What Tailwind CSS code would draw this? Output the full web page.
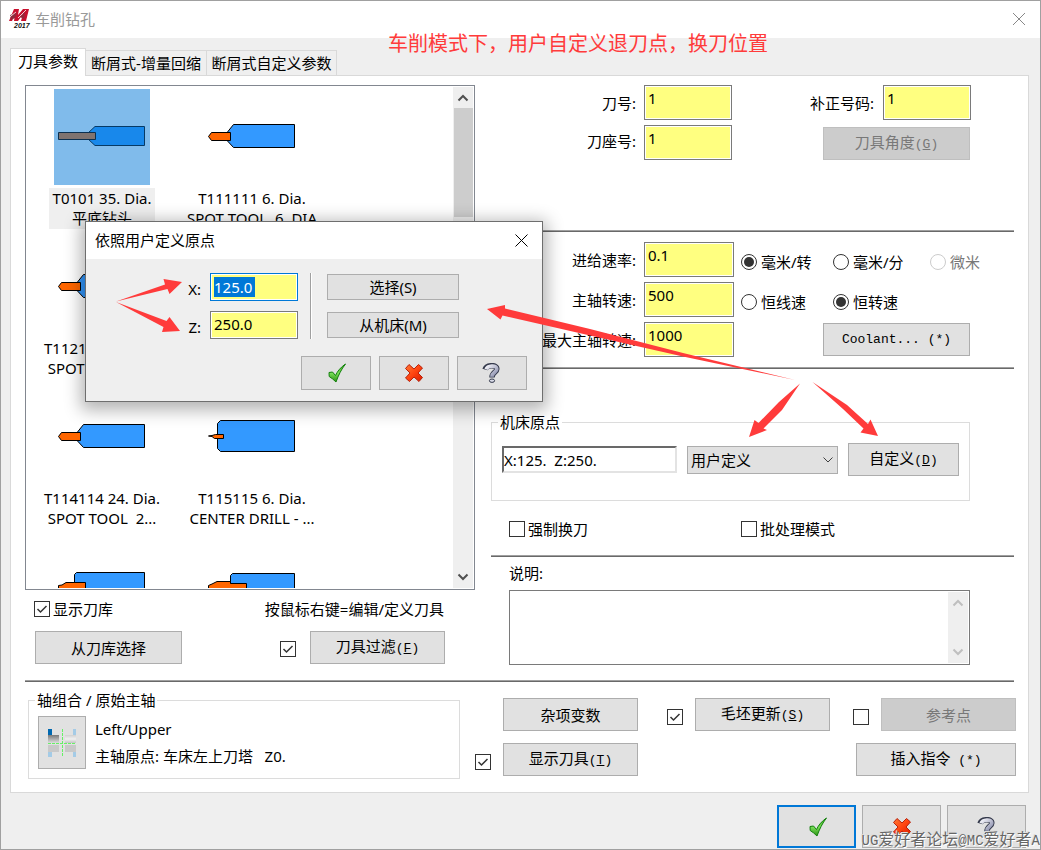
<!DOCTYPE html>
<html lang="zh-CN">
<head>
<meta charset="utf-8">
<title>车削钻孔</title>
<script src="https://cdn.jsdelivr.net/npm/@tailwindcss/browser@4"></script>
</head>
<body class="font-['Noto_Sans','Noto_Sans_CJK_SC',sans-serif] text-[15px] leading-5 text-black">

<svg width="0" height="0" class="absolute" aria-hidden="true">
  <defs>
    <linearGradient id="gGreen" x1="0" y1="0" x2="0" y2="1"><stop offset="0" stop-color="#3fae1c"/><stop offset=".5" stop-color="#7be05a"/><stop offset="1" stop-color="#2a8f10"/></linearGradient>
    <linearGradient id="gRed" x1="0" y1="0" x2="1" y2="1"><stop offset="0" stop-color="#ff7a35"/><stop offset=".5" stop-color="#ff4410"/><stop offset="1" stop-color="#d81c00"/></linearGradient>
    <linearGradient id="gGray" x1="0" y1="0" x2="1" y2="1"><stop offset="0" stop-color="#f4f4fa"/><stop offset="1" stop-color="#8488a8"/></linearGradient>
    <symbol id="ok" viewBox="0 0 20 20"><path d="M3 9.500 L6.500 9 L9.500 12.500 C11.500 8 15 4 19.500 1 C15.500 6 12.500 12 10 19 Q6.500 15.500 3.200 13.500 Z" fill="url(#gGreen)" stroke="#12800c" stroke-width="1"/></symbol>
    <symbol id="no" viewBox="0 0 20 20"><path d="M5 1.500 L10 6 L14.500 1.500 L18.500 5 L14 10 L18.500 14.500 L15 18.500 L10 14 L5.500 18.500 L1.500 15 L6 10 L1.500 5.500 Z" fill="url(#gRed)" stroke="#b8200a" stroke-width="1" stroke-linejoin="round"/></symbol>
    <symbol id="help" viewBox="0 0 20 20"><g fill="none"><path d="M3 6.500 C4.500 1.800 14.800 1.200 14.800 6 C14.800 9.400 10 9.200 10 14.500" stroke="#353a4c" stroke-width="5.500"/><path d="M4.200 6.400 C5.500 2.500 14.800 1.700 14.800 6 C14.800 9.400 10 9.200 10 13.700" stroke="url(#gGray)" stroke-width="3.700"/></g><ellipse cx="10" cy="17.700" rx="2.600" ry="1.700" fill="#d9dbe8" stroke="#353a4c"/></symbol>
    <symbol id="tick" viewBox="0 0 16 16"><path d="M3.500 8 L6.500 11 L12.500 5" fill="none" stroke="#333" stroke-width="1.500"/></symbol>
    <symbol id="spot" viewBox="0 0 96 96"><path d="M23.500 43 L29.500 35.500 H90.500 V58.500 H29.500 L23.500 52 Z" fill="#3399ff" stroke="#000"/><path d="M7.500 43.500 H26.500 V51.500 H7.500 L4.500 47.500 Z" fill="#ff6600" stroke="#000"/></symbol>
  </defs>
</svg>

<main class="relative flex min-h-screen flex-col overflow-hidden border border-[#a0a0a0] bg-[#efefef]">
  <header class="flex h-[37px] shrink-0 items-center bg-white pr-[13px] pb-px pl-2">
    <svg class="h-5 w-[22px]" viewBox="0 0 22 20" aria-hidden="true">
      <path d="M5 0 H10 L9 6 L14 0 H20 L17 12 H12 L14 5 L9 12 H5 L6 5 L3 12 H0 Z" fill="#c8102e"/>
      <path d="M1 6 L8 4 L6 9 L2 11 Z M11 8 L16 3 L15 10 Z" fill="#8e2a3c"/>
      <path d="M0 8.500 L7 3 M9 9 L17 1" stroke="#fff" stroke-width=".8"/>
      <text x="5" y="19" font-family="Liberation Sans" font-size="7" font-weight="bold" font-style="italic" fill="#111">2017</text>
    </svg>
    <h1 class="ml-1 text-[#999]">车削钻孔</h1>
    <button type="button" aria-label="关闭窗口" class="ml-auto grid size-4 place-items-center"><svg class="size-3" viewBox="0 0 12 12"><path d="M0 0 L12 12 M12 0 L0 12" stroke="#888" fill="none"/></svg></button>
  </header>

  <nav class="z-10 -mb-px flex items-end pt-[10px] pl-[9px]">
    <button type="button" class="h-7 w-[76px] border border-b-0 border-[#d9d9d9] bg-white pb-1 whitespace-nowrap">刀具参数</button>
    <button type="button" class="mb-px h-[25px] w-[121px] border-t border-r border-[#d9d9d9] whitespace-nowrap">断屑式-增量回缩</button>
    <button type="button" class="mb-px h-[25px] w-[130px] border-t border-r border-[#d9d9d9] whitespace-nowrap">断屑式自定义参数</button>
  </nav>

  <section class="mr-[11px] ml-[9px] border border-[#d9d9d9] bg-white pb-[13px]">
    <div class="flex gap-4 px-[14px] pt-[9px]">

      <div class="w-[450px] shrink-0">
        <div class="flex h-[505px] border border-[#828790] p-px">
          <ul class="grid flex-1 auto-rows-[150px] grid-cols-[150px_150px] overflow-hidden pt-0.5 text-center whitespace-pre">
            <li class="flex flex-col items-center">
              <svg class="size-24 shrink-0 bg-[#80bbeb]" viewBox="0 0 96 96"><path d="M34 44 L41 37.500 H90.500 V56.500 H41 L34 50 Z" fill="#1888eb" stroke="#063a66"/><path d="M4.500 43.500 H41.500 V50.500 H4.500 Z" fill="#7f7370" stroke="#0b3050"/></svg>
              <span class="mt-[3px] w-[106px] bg-[#efefef] pb-px">T0101 35. Dia.<br>平底钻头</span>
            </li>
            <li class="flex flex-col items-center"><svg class="size-24 shrink-0"><use href="#spot"/></svg><span class="mt-[3px]">T111111 6. Dia.<br>SPOT TOOL  6. DIA</span></li>
            <li class="flex flex-col items-center"><svg class="size-24 shrink-0"><use href="#spot"/></svg><span class="mt-[3px]">T112112 24. Dia.<br>SPOT TOOL  2...</span></li>
            <li></li>
            <li class="flex flex-col items-center"><svg class="size-24 shrink-0"><use href="#spot"/></svg><span class="mt-[3px]">T114114 24. Dia.<br>SPOT TOOL  2...</span></li>
            <li class="flex flex-col items-center"><svg class="size-24 shrink-0" viewBox="0 0 96 96"><path d="M16.500 31.500 H90.500 V62.500 H16.500 L13.500 59.500 V34.500 Z" fill="#3399ff" stroke="#000"/><path d="M4.500 47 L8 46.500 L11.500 45.500 H19.500 V49.500 H10.500 L8 47.500 Z" fill="#ff6600" stroke="#000"/></svg><span class="mt-[3px]">T115115 6. Dia.<br>CENTER DRILL - ...</span></li>
            <li class="flex flex-col items-center"><svg class="size-24 shrink-0" viewBox="0 0 96 96"><path d="M22.500 33.500 H90.500 V62.500 H20.500 V35.500 Z" fill="#3399ff" stroke="#000"/><path d="M4.500 46.500 L8 46 L12 43.500 H31.500 V52.500 H4.500 Z" fill="#ff6600" stroke="#000"/></svg></li>
            <li class="flex flex-col items-center"><svg class="size-24 shrink-0" viewBox="0 0 96 96"><path d="M28.500 34.500 H90.500 V62.500 H26.500 V36.500 Z" fill="#3399ff" stroke="#000"/><path d="M4.500 46.500 L8 45 L13 42.500 H26.500 V44.500 H42.500 V52.500 H4.500 Z" fill="#ff6600" stroke="#000"/></svg></li>
          </ul>
          <div class="flex w-5 shrink-0 flex-col items-center bg-[#efefef]">
            <svg class="my-[6px] h-[9px] w-3 shrink-0" viewBox="0 0 12 9"><path d="M1.500 7.500 L6 3 L10.500 7.500" fill="none" stroke="#505050" stroke-width="2"/></svg>
            <div class="h-[109px] w-[19px] bg-[#cdcdcd]"></div>
            <svg class="mt-auto mb-[6px] h-[9px] w-3 shrink-0" viewBox="0 0 12 9"><path d="M1.500 1.500 L6 6 L10.500 1.500" fill="none" stroke="#505050" stroke-width="2"/></svg>
          </div>
        </div>
        <div class="mt-[9px] flex items-center justify-between pr-[31px] pl-[9px]">
          <label class="flex items-center gap-[3px]"><span class="grid"><input type="checkbox" checked class="col-start-1 row-start-1 size-4 appearance-none border border-[#333] bg-white"><svg class="pointer-events-none col-start-1 row-start-1 size-4"><use href="#tick"/></svg></span>显示刀库</label>
          <p>按鼠标右键=编辑/定义刀具</p>
        </div>
        <div class="mt-3 flex items-center pr-[30px] pl-[10px]">
          <button type="button" class="h-[33px] w-[147px] border border-[#adadad] bg-[#e1e1e1]">从刀库选择</button>
          <span class="mt-[2px] ml-auto grid"><input type="checkbox" checked aria-label="启用刀具过滤" class="col-start-1 row-start-1 size-4 appearance-none border border-[#333] bg-white"><svg class="pointer-events-none col-start-1 row-start-1 size-4"><use href="#tick"/></svg></span>
          <button type="button" class="ml-[14px] h-[33px] w-[135px] border border-[#adadad] bg-[#e1e1e1]">刀具过滤<span class="font-['Liberation_Mono',monospace] text-[13px]">(<u>F</u>)</span></button>
        </div>
      </div>

      <div class="min-w-0 flex-1">
        <div class="flex flex-col gap-[5px]">
          <div class="flex items-center pr-[43px]">
            <label for="toolNo" class="w-[145px] text-right">刀号:</label>
            <input id="toolNo" value="1" class="ml-2 h-[35px] w-[88px] border border-[#7a7a7a] bg-[#ffff80] px-[3px] pb-[10px] inset-ring inset-ring-white">
            <label for="offNo" class="ml-auto">补正号码:</label>
            <input id="offNo" value="1" class="ml-[9px] h-[35px] w-[88px] border border-[#7a7a7a] bg-[#ffff80] px-[3px] pb-[10px] inset-ring inset-ring-white">
          </div>
          <div class="flex items-center pr-[44px]">
            <label for="holderNo" class="w-[145px] pb-1 text-right">刀座号:</label>
            <input id="holderNo" value="1" class="ml-2 h-[35px] w-[88px] border border-[#7a7a7a] bg-[#ffff80] px-[3px] pb-[10px] inset-ring inset-ring-white">
            <button type="button" disabled class="mt-[2px] ml-auto h-[33px] w-[147px] border border-[#bfbfbf] bg-[#cccccc] text-[#787878]">刀具角度<span class="font-['Liberation_Mono',monospace] text-[13px]">(<u>G</u>)</span></button>
          </div>
        </div>
        <hr class="mt-[70px] h-[2px] border-t border-b border-t-[#a0a0a0] border-b-[#696969]">
        <div class="mt-[10px] flex flex-col gap-[5px]">
          <div class="flex items-center">
            <label for="feed" class="w-[145px] shrink-0 text-right">进给速率:</label>
            <input id="feed" value="0.1" class="mr-[7px] ml-2 h-[35px] w-[90px] shrink-0 border border-[#7a7a7a] bg-[#ffff80] px-[3px] pb-[10px] inset-ring inset-ring-white">
            <label class="flex w-[92px] items-center gap-1 pt-1 whitespace-nowrap"><input type="radio" name="feedUnit" checked class="size-4 appearance-none rounded-full border border-[#333] bg-clip-content p-[2px] checked:bg-[#333]">毫米/转</label>
            <label class="flex w-[97px] items-center gap-1 pt-1 whitespace-nowrap"><input type="radio" name="feedUnit" class="size-4 appearance-none rounded-full border border-[#333] bg-clip-content p-[2px] checked:bg-[#333]">毫米/分</label>
            <label class="flex items-center gap-1 pt-1 whitespace-nowrap text-[#787878]"><input type="radio" name="feedUnit" disabled class="size-4 appearance-none rounded-full border border-[#ccc] p-[2px]">微米</label>
          </div>
          <div class="flex items-center">
            <label for="spindle" class="w-[145px] shrink-0 text-right">主轴转速:</label>
            <input id="spindle" value="500" class="mr-[7px] ml-2 h-[35px] w-[90px] shrink-0 border border-[#7a7a7a] bg-[#ffff80] px-[3px] pb-[10px] inset-ring inset-ring-white">
            <label class="flex w-[92px] items-center gap-1 pt-1 whitespace-nowrap"><input type="radio" name="speedMode" class="size-4 appearance-none rounded-full border border-[#333] bg-clip-content p-[2px] checked:bg-[#333]">恒线速</label>
            <label class="flex items-center gap-1 pt-1 whitespace-nowrap"><input type="radio" name="speedMode" checked class="size-4 appearance-none rounded-full border border-[#333] bg-clip-content p-[2px] checked:bg-[#333]">恒转速</label>
          </div>
          <div class="flex items-center pr-[44px]">
            <label for="maxSpindle" class="w-[145px] shrink-0 text-right">最大主轴转速:</label>
            <input id="maxSpindle" value="1000" class="ml-2 h-[35px] w-[90px] border border-[#7a7a7a] bg-[#ffff80] px-[3px] pb-[10px] inset-ring inset-ring-white">
            <button type="button" class="ml-auto h-[33px] w-[147px] border border-[#adadad] bg-[#e1e1e1] font-['Liberation_Mono',monospace] text-[13px] whitespace-pre">Coolant... (*)</button>
          </div>
        </div>
        <hr class="mt-[10px] h-[2px] border-t border-b border-t-[#a0a0a0] border-b-[#696969]">
        <fieldset class="mt-[43px] mr-[44px] border border-[#dcdcdc] px-[10px] pt-[11px] pb-6">
          <legend class="-ml-1 px-[2px]">机床原点</legend>
          <div class="flex items-center gap-[10px]">
            <input aria-label="机床原点坐标" value="X:125.  Z:250." class="h-[27px] w-[175px] min-w-0 border-2 border-t-[#696969] border-r-[#e3e3e3] border-b-[#e3e3e3] border-l-[#696969] bg-white">
            <span class="grid min-w-0 flex-1 items-center">
              <select aria-label="原点类型" class="col-start-1 row-start-1 h-7 appearance-none border border-[#adadad] bg-[#e1e1e1] px-[3px]"><option>用户定义</option></select>
              <svg class="pointer-events-none col-start-1 row-start-1 mr-[5px] h-2 w-[10px] justify-self-end" viewBox="0 0 10 8"><path d="M.5 1.500 L5 6 L9.500 1.500" fill="none" stroke="#404040"/></svg>
            </span>
            <button type="button" class="h-[33px] w-[111px] border border-[#adadad] bg-[#e1e1e1]">自定义<span class="font-['Liberation_Mono',monospace] text-[13px]">(<u>D</u>)</span></button>
          </div>
        </fieldset>
        <div class="mt-[18px] flex pl-[18px]">
          <label class="flex w-[232px] items-center gap-[3px]"><input type="checkbox" class="size-4 appearance-none border border-[#333] bg-white">强制换刀</label>
          <label class="flex items-center gap-[3px]"><input type="checkbox" class="size-4 appearance-none border border-[#333] bg-white">批处理模式</label>
        </div>
        <hr class="mt-4 h-[2px] border-t border-b border-t-[#a0a0a0] border-b-[#696969]">
        <div class="mt-[6px] mr-[44px] ml-[18px]">
          <label for="note" class="block">说明:</label>
          <div class="mt-[7px] flex h-[75px] border border-[#7a7a7a] p-px">
            <textarea id="note" class="min-w-0 flex-1 resize-none overflow-hidden"></textarea>
            <div class="flex w-5 flex-col items-center justify-between bg-[#efefef] py-[6px]">
              <svg class="h-[9px] w-3" viewBox="0 0 12 9"><path d="M1.500 7.500 L6 3 L10.500 7.500" fill="none" stroke="#bfbfbf" stroke-width="2"/></svg>
              <svg class="h-[9px] w-3" viewBox="0 0 12 9"><path d="M1.500 1.500 L6 6 L10.500 1.500" fill="none" stroke="#bfbfbf" stroke-width="2"/></svg>
            </div>
          </div>
        </div>
      </div>
    </div>

    <hr class="mx-[14px] mt-[15px] h-[2px] border-t border-b border-t-[#a0a0a0] border-b-[#696969]">

    <div class="flex items-start gap-[15px] pt-2 pr-3 pl-[17px]">
      <fieldset class="w-[432px] border border-[#dcdcdc] px-[9px] pt-[6px] pb-[9px]">
        <legend class="-ml-[3px] px-[2px]">轴组合 / 原始主轴</legend>
        <div class="flex items-center gap-[9px]">
          <button type="button" aria-label="轴组合" class="grid h-[53px] w-12 place-items-center border border-[#adadad] bg-[#e1e1e1]">
            <svg class="h-7 w-7" viewBox="0 0 28 28"><defs><linearGradient id="ga" x1="0" y1="0" x2="0" y2="1"><stop offset="0" stop-color="#7a7a7a"/><stop offset="1" stop-color="#dedede"/></linearGradient><linearGradient id="gb" x1="0" y1="0" x2="0" y2="1"><stop offset="0" stop-color="#d0d0d0"/><stop offset=".5" stop-color="#f0f0f0"/><stop offset="1" stop-color="#c4c4c4"/></linearGradient></defs>
              <path d="M0 0 H4 V6 H0 Z" fill="#0068b0"/><path d="M25 0 H28 V6 H25 Z M0 23 H4 V28 H0 Z M25 23 H28 V28 H25 Z" fill="#a4cbe6"/>
              <path d="M0 6 H11 V14 H0 Z" fill="url(#ga)"/><path d="M0 16 H11 V23 H0 Z" fill="#c9c9c9"/><path d="M17 6 H28 V14 H17 Z" fill="url(#gb)"/><path d="M17 16 H28 V23 H17 Z" fill="#c9c9c9"/>
              <path d="M14.500 0 V28 M0 14.500 H28" stroke="#66f066" stroke-dasharray="3 1"/></svg>
          </button>
          <div class="flex flex-col gap-[7px]"><span>Left/Upper</span><span class="whitespace-pre">主轴原点: 车床左上刀塔   Z0.</span></div>
        </div>
      </fieldset>
      <div class="flex flex-1 flex-col gap-3 pt-2">
        <div class="flex items-center pl-7">
          <button type="button" class="h-[33px] w-[135px] border border-[#adadad] bg-[#e1e1e1]">杂项变数</button>
          <span class="mt-1 mr-3 ml-auto grid"><input type="checkbox" checked aria-label="启用毛坯更新" class="col-start-1 row-start-1 size-4 appearance-none border border-[#333] bg-white"><svg class="pointer-events-none col-start-1 row-start-1 size-4"><use href="#tick"/></svg></span>
          <button type="button" class="h-[33px] w-[135px] border border-[#adadad] bg-[#e1e1e1]">毛坯更新<span class="font-['Liberation_Mono',monospace] text-[13px]">(<u>S</u>)</span></button>
          <input type="checkbox" aria-label="启用参考点" class="mt-1 mr-3 ml-[23px] size-4 appearance-none border border-[#333] bg-white">
          <button type="button" disabled class="h-[33px] w-[135px] border border-[#bfbfbf] bg-[#cccccc] text-[#787878]">参考点</button>
        </div>
        <div class="flex items-center gap-3">
          <span class="mt-1 grid"><input type="checkbox" checked aria-label="启用显示刀具" class="col-start-1 row-start-1 size-4 appearance-none border border-[#333] bg-white"><svg class="pointer-events-none col-start-1 row-start-1 size-4"><use href="#tick"/></svg></span>
          <button type="button" class="h-[33px] w-[135px] border border-[#adadad] bg-[#e1e1e1]">显示刀具<span class="font-['Liberation_Mono',monospace] text-[13px]">(<u>T</u>)</span></button>
          <button type="button" class="ml-auto h-[33px] w-[160px] border border-[#adadad] bg-[#e1e1e1]">插入指令<span class="font-['Liberation_Mono',monospace] text-[13px]"> (*)</span></button>
        </div>
      </div>
    </div>
  </section>

  <footer class="mt-3 flex justify-end gap-[6px] pr-[14px]">
    <button type="button" aria-label="确定" class="grid h-[43px] w-[79px] place-items-center border-2 border-[#0078d7] bg-[#e1e1e1]"><svg class="size-5"><use href="#ok"/></svg></button>
    <button type="button" aria-label="取消" class="grid h-[43px] w-[79px] place-items-center border border-[#adadad] bg-[#e1e1e1]"><svg class="size-5"><use href="#no"/></svg></button>
    <button type="button" aria-label="帮助" class="grid h-[43px] w-[79px] place-items-center border border-[#adadad] bg-[#e1e1e1]"><svg class="size-5"><use href="#help"/></svg></button>
  </footer>

  <section role="dialog" aria-labelledby="dlgTitle" class="absolute top-[220px] left-[84px] z-20 w-[458px] border border-[#6e6e6e] bg-[#efefef] shadow-[0_4px_16px_4px_rgba(0,0,0,0.3)]">
    <header class="flex h-[37px] items-center justify-between bg-white pr-[14px] pb-px pl-[9px]">
      <h2 id="dlgTitle">依照用户定义原点</h2>
      <button type="button" aria-label="关闭" class="grid place-items-center"><svg class="size-[13px]" viewBox="0 0 13 13"><path d="M.5 .5 L12.500 12.500 M12.500 .5 L.5 12.500" stroke="#000" fill="none"/></svg></button>
    </header>
    <div class="flex pt-[14px]">
      <div class="flex flex-col gap-[10px] pr-3">
        <div class="flex items-center"><label for="ox" class="w-[115px] pt-1 text-right">X:</label><div class="ml-[9px] flex h-7 w-[88px] items-center border border-[#0078d7] bg-[#ffff80] px-[3px] pb-px inset-ring inset-ring-white"><input id="ox" value="125.0" class="h-5 w-[41px] bg-[#0078d7] text-white"></div></div>
        <div class="flex items-center"><label for="oz" class="w-[115px] pt-1 text-right">Z:</label><input id="oz" value="250.0" class="ml-[9px] h-7 w-[88px] border border-[#7a7a7a] bg-[#ffff80] px-[3px] pb-[2px] inset-ring inset-ring-white"></div>
      </div>
      <div class="w-0.5 border-r border-l border-l-[#a0a0a0] border-r-white"></div>
      <div class="ml-[15px] flex flex-col justify-between py-px">
        <button type="button" class="h-[26px] w-[132px] border border-[#adadad] bg-[#e1e1e1]">选择(S)</button>
        <button type="button" class="h-[26px] w-[132px] border border-[#adadad] bg-[#e1e1e1]">从机床(M)</button>
      </div>
    </div>
    <div class="mt-[17px] mb-[11px] flex justify-end gap-2 pr-[15px]">
      <button type="button" aria-label="确定" class="grid h-[34px] w-[70px] place-items-center border border-[#adadad] bg-[#e1e1e1]"><svg class="size-5"><use href="#ok"/></svg></button>
      <button type="button" aria-label="取消" class="grid h-[34px] w-[70px] place-items-center border border-[#adadad] bg-[#e1e1e1]"><svg class="size-5"><use href="#no"/></svg></button>
      <button type="button" aria-label="帮助" class="grid h-[34px] w-[70px] place-items-center border border-[#adadad] bg-[#e1e1e1]"><svg class="size-5"><use href="#help"/></svg></button>
    </div>
  </section>

  <p class="absolute top-[27px] left-[387px] z-30 text-[20px] leading-8 whitespace-nowrap text-[#ff3b3b]">车削模式下，用户自定义退刀点，换刀位置</p>
  <svg class="pointer-events-none absolute -top-px -left-px z-30 h-[850px] w-[1041px]" viewBox="0 0 1041 850" fill="#ff3b3b" aria-hidden="true">
    <path d="M116 301.500 L165 284.500 L163.500 279 L182 282 L169.500 294 L167.500 289 Z"/>
    <path d="M116 302 L166.500 321 L169.500 317 L180 331 L162 332 L163.500 327 Z"/>
    <path d="M487 309 L505 305 V308.500 L590 329 L683 353 L795 380 L683 356.500 L590 335.500 L502.500 315.500 L500.500 319.500 Z"/>
    <path d="M800 383.500 L782 410 L763.500 428.500 L767 430 L749 437 L754.500 420 L758.500 423 L779 402 Z"/>
    <path d="M812.500 382 L847 405 L868 424 L870.500 419.500 L878 436 L860.500 432.500 L863.500 428.500 L843 409 Z"/>
  </svg>
  <p class="absolute right-0 bottom-0 z-30 text-[16px] leading-4 whitespace-nowrap text-[#666] [text-shadow:1px_1px_0_#fff,-1px_-1px_0_#ddd]"><span class="font-['Liberation_Mono',monospace] text-[14px]">UG</span>爱好者论坛<span class="font-['Liberation_Mono',monospace] text-[14px]">@MC</span>爱好者<span class="font-['Liberation_Mono',monospace] text-[14px]">A</span></p>
</main>
</body>
</html>
